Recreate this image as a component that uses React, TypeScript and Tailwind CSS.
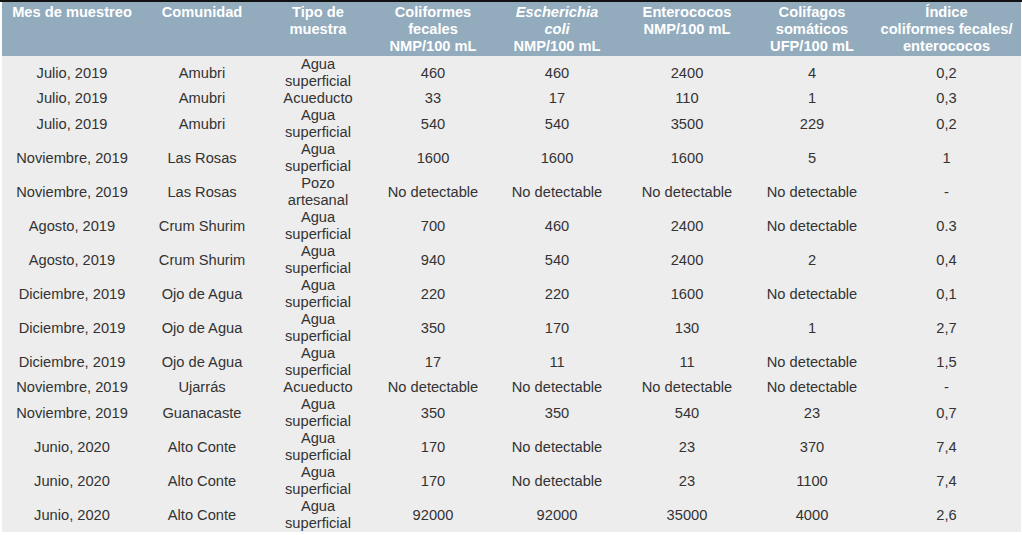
const rows: [string, string, string, string, string, string, string, string][] = [
  ['Julio, 2019', 'Amubri', 'Agua superficial', '460', '460', '2400', '4', '0,2'],
  ['Julio, 2019', 'Amubri', 'Acueducto', '33', '17', '110', '1', '0,3'],
  ['Julio, 2019', 'Amubri', 'Agua superficial', '540', '540', '3500', '229', '0,2'],
  ['Noviembre, 2019', 'Las Rosas', 'Agua superficial', '1600', '1600', '1600', '5', '1'],
  ['Noviembre, 2019', 'Las Rosas', 'Pozo artesanal', 'No detectable', 'No detectable', 'No detectable', 'No detectable', '-'],
  ['Agosto, 2019', 'Crum Shurim', 'Agua superficial', '700', '460', '2400', 'No detectable', '0.3'],
  ['Agosto, 2019', 'Crum Shurim', 'Agua superficial', '940', '540', '2400', '2', '0,4'],
  ['Diciembre, 2019', 'Ojo de Agua', 'Agua superficial', '220', '220', '1600', 'No detectable', '0,1'],
  ['Diciembre, 2019', 'Ojo de Agua', 'Agua superficial', '350', '170', '130', '1', '2,7'],
  ['Diciembre, 2019', 'Ojo de Agua', 'Agua superficial', '17', '11', '11', 'No detectable', '1,5'],
  ['Noviembre, 2019', 'Ujarrás', 'Acueducto', 'No detectable', 'No detectable', 'No detectable', 'No detectable', '-'],
  ['Noviembre, 2019', 'Guanacaste', 'Agua superficial', '350', '350', '540', '23', '0,7'],
  ['Junio, 2020', 'Alto Conte', 'Agua superficial', '170', 'No detectable', '23', '370', '7,4'],
  ['Junio, 2020', 'Alto Conte', 'Agua superficial', '170', 'No detectable', '23', '1100', '7,4'],
  ['Junio, 2020', 'Alto Conte', 'Agua superficial', '92000', '92000', '35000', '4000', '2,6'],
];

export default function App() {
  return (
    <div className="w-[1022px] h-[535px] bg-white border-t-2 border-[#111] pl-[2px] pr-[1px] font-['Liberation_Sans',Arial,sans-serif] text-[14.67px] leading-[17px]">
      <table className="w-full table-fixed border-collapse">
        <colgroup>
          <col className="w-[140px]" />
          <col className="w-[120px]" />
          <col className="w-[112px]" />
          <col className="w-[118px]" />
          <col className="w-[130px]" />
          <col className="w-[130px]" />
          <col className="w-[120px]" />
          <col />
        </colgroup>
        <thead>
          <tr className="bg-[#92abbd] text-white font-bold align-top">
            <th className="pt-[2px] pb-[1px] font-bold">Mes de muestreo</th>
            <th className="pt-[2px] pb-[1px] font-bold">Comunidad</th>
            <th className="pt-[2px] pb-[1px] font-bold">Tipo de<br />muestra</th>
            <th className="pt-[2px] pb-[1px] font-bold">Coliformes<br />fecales<br />NMP/100 mL</th>
            <th className="pt-[2px] pb-[1px] font-bold"><i>Escherichia<br />coli</i><br />NMP/100 mL</th>
            <th className="pt-[2px] pb-[1px] font-bold">Enterococos<br />NMP/100 mL</th>
            <th className="pt-[2px] pb-[1px] font-bold">Colifagos<br />somáticos<br />UFP/100 mL</th>
            <th className="pt-[2px] pb-[1px] font-bold">Índice<br />coliformes fecales/<br />enterococos</th>
          </tr>
        </thead>
        <tbody className="bg-[#ededed] text-[#333]">
          {rows.map((r, i) => (
            <tr key={i} className="align-middle">
              <td className="text-center p-0">{r[0]}</td>
              <td className="text-center p-0">{r[1]}</td>
              <td className="text-center p-0">
                {r[2].includes(' ') ? (
                  <>
                    {r[2].split(' ')[0]}
                    <br />
                    {r[2].split(' ')[1]}
                  </>
                ) : (
                  r[2]
                )}
              </td>
              <td className="text-center p-0">{r[3]}</td>
              <td className="text-center p-0">{r[4]}</td>
              <td className="text-center p-0">{r[5]}</td>
              <td className="text-center p-0">{r[6]}</td>
              <td className="text-center p-0">{r[7]}</td>
            </tr>
          ))}
        </tbody>
      </table>
    </div>
  );
}
